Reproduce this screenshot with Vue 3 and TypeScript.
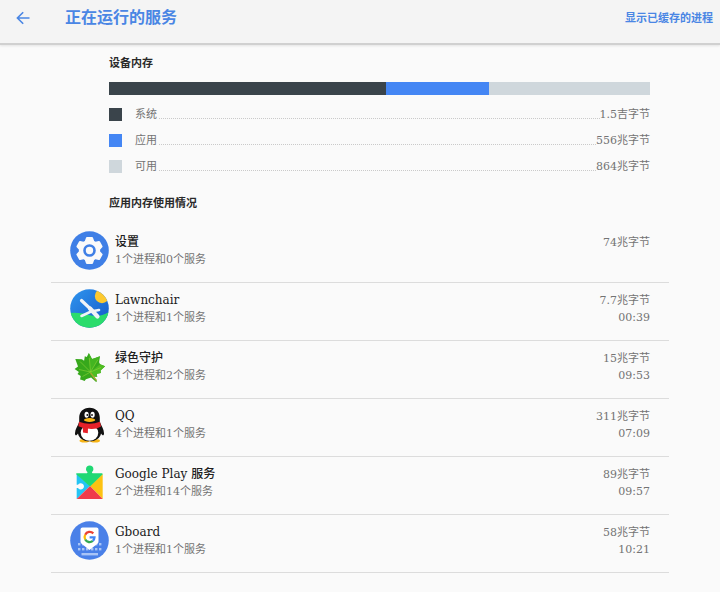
<script setup lang="ts">
interface Segment {
  key: string
  label: string
  value: string
  share: number
}

interface RunningApp {
  id: string
  name: string
  detail: string
  memory: string
  uptime?: string
}

const segments: Segment[] = [
  { key: 'system', label: '系统', value: '1.5吉字节', share: 51.2 },
  { key: 'used', label: '应用', value: '556兆字节', share: 19 },
  { key: 'free', label: '可用', value: '864兆字节', share: 29.8 },
]

const apps: RunningApp[] = [
  { id: 'settings', name: '设置', detail: '1个进程和0个服务', memory: '74兆字节' },
  { id: 'lawnchair', name: 'Lawnchair', detail: '1个进程和1个服务', memory: '7.7兆字节', uptime: '00:39' },
  { id: 'greenify', name: '绿色守护', detail: '1个进程和2个服务', memory: '15兆字节', uptime: '09:53' },
  { id: 'qq', name: 'QQ', detail: '4个进程和1个服务', memory: '311兆字节', uptime: '07:09' },
  { id: 'play', name: 'Google Play 服务', detail: '2个进程和14个服务', memory: '89兆字节', uptime: '09:57' },
  { id: 'gboard', name: 'Gboard', detail: '1个进程和1个服务', memory: '58兆字节', uptime: '10:21' },
]

const toothAngles = [0, 60, 120, 180, 240, 300]
const keyColumns = [9, 13, 26, 30]
const lowerKeyColumns = [9, 13, 17, 22, 26, 30]
</script>

<template>
  <div class="page">
    <header class="toolbar">
      <button class="back" type="button" aria-label="返回">
        <svg viewBox="0 0 14 14" aria-hidden="true">
          <path d="M13.5 7H1.5M7.2 1.2L1.4 7l5.8 5.8" />
        </svg>
      </button>
      <h1>正在运行的服务</h1>
      <a class="cached" href="#cached">显示已缓存的进程</a>
    </header>

    <main>
      <section class="memory">
        <h2>设备内存</h2>
        <div class="bar">
          <span
            v-for="s in segments"
            :key="s.key"
            :class="s.key"
            :style="{ width: s.share + '%' }"
          ></span>
        </div>
        <dl>
          <div v-for="s in segments" :key="s.key" class="legend">
            <dt><i :class="s.key"></i>{{ s.label }}</dt>
            <dd>{{ s.value }}</dd>
          </div>
        </dl>
        <h2>应用内存使用情况</h2>
      </section>

      <ul class="apps">
        <li v-for="app in apps" :key="app.id">
          <a class="app" :href="'#' + app.id">
            <svg class="icon" viewBox="0 0 39 39" aria-hidden="true">
              <g v-if="app.id === 'settings'">
                <circle cx="19.5" cy="19.5" r="19.3" fill="#3f7fe6" />
                <g fill="#fafafa">
                  <circle cx="19.5" cy="19.5" r="10.6" />
                  <path
                    v-for="angle in toothAngles"
                    :key="angle"
                    d="M14.500 11l1.500-4.200q.2-.8 1-.8h5q.8 0 1 .8l1.500 4.200z"
                    :transform="`rotate(${angle} 19.5 19.5)`"
                  />
                </g>
                <circle cx="19.5" cy="19.5" r="5" fill="#fafafa" stroke="#3f7fe6" stroke-width="2.6" />
              </g>

              <g v-else-if="app.id === 'lawnchair'">
                <defs>
                  <linearGradient id="sky" x1="0" y1="0" x2="1" y2="1">
                    <stop offset="0" stop-color="#2f95ee" />
                    <stop offset="1" stop-color="#1558c8" />
                  </linearGradient>
                  <clipPath id="disc"><circle cx="19.5" cy="19.5" r="19.3" /></clipPath>
                </defs>
                <g clip-path="url(#disc)">
                  <path d="M0 0h39v39H0z" fill="url(#sky)" />
                  <circle cx="32" cy="7" r="7.2" fill="#fdc92f" />
                  <path d="M0 24Q9 23 19 26T39 23v16H0z" fill="#2bdc6c" />
                </g>
                <g fill="none" stroke="#f0f3f7" stroke-linecap="round">
                  <path d="M11.500 11.500L20 19.500" stroke-width="3.200" />
                  <path d="M20 19.500l7.500 8" stroke-width="4.200" />
                  <path d="M11.500 27L21 22.500l8-1.500" stroke-width="2.600" />
                </g>
              </g>

              <g v-else-if="app.id === 'greenify'">
                <path
                  d="M18.800 6l3.200 6 1.800-.6L30 9.200l-.9 6 1 2 5 2-4.600 4.200.3 2.600-4 .8.4 3-4.700-.4 4.600 4.600-1 1-5-4.400-5.200 1.600-1.300 1.800-2.500-1-2-.4.600-3.600-3.200-2 1.400-2.100-4.300-3 3.400-2.400L5.300 12l6.600.3 2.200 1.500.7-4.600 2 .8z"
                  fill="#37a81c"
                />
                <path d="M18.800 6l3.200 6 1.800-.6L30 9.200 20.500 25z" fill="#43b520" />
                <path d="M30.100 17.200l5 2-4.600 4.200.3 2.600-4 .8.400 3-4.700-.4-2-4.400z" fill="#4fbd22" />
                <path
                  d="M19.300 11l1.200 14 5.500 8.500M20.500 25L10 14.500M20.500 25l7.500-12.500M20.500 25L9 22.500M20.500 25l10.500-4.500M20.500 25l-8 4.500"
                  fill="none"
                  stroke="#8fd438"
                  stroke-width=".6"
                />
                <path d="M20.500 26l6 7.500" fill="none" stroke="#a3a52c" stroke-width="1.300" />
              </g>

              <g v-else-if="app.id === 'qq'">
                <ellipse cx="14.500" cy="35.800" rx="5" ry="1.800" fill="#f7b415" />
                <ellipse cx="25" cy="35.800" rx="5" ry="1.800" fill="#f7b415" />
                <path
                  d="M19.500 2.700c6.400 0 10.300 4.300 10.300 10v4c1.500 4 4.200 7.500 4.200 11.500 0 2.500-1.300 3-3 .3-.8 4.500-5 7.800-11.500 7.800S8.800 33 8 28.500c-1.700 2.700-3 2.200-3-.3 0-4 3-7.500 4.200-11.500v-4c0-5.700 4-10 10.300-10z"
                  fill="#111"
                />
                <ellipse cx="19.500" cy="27.800" rx="8.800" ry="8" fill="#fff" />
                <path d="M9 16.800q10.500 4 21 0l1 4.700q-4 2.500-9 2.600-7 .2-13.600-2.800z" fill="#e52129" />
                <path d="M12.800 22l5.200 1-.2 5.200-4.800-.8z" fill="#e52129" />
                <ellipse cx="16.600" cy="9.700" rx="2.100" ry="3" fill="#fff" />
                <ellipse cx="22.600" cy="9.700" rx="2.100" ry="3" fill="#fff" />
                <circle cx="17.300" cy="10" r=".9" fill="#111" />
                <circle cx="22" cy="10" r=".9" fill="#111" />
                <ellipse cx="19.600" cy="15" rx="5.600" ry="1.900" fill="#f9b716" />
              </g>

              <g v-else-if="app.id === 'play'">
                <path d="M6.700 11L20 23 6.700 36z" fill="#24c4f4" />
                <path d="M32.700 11L20 23l12.700 13z" fill="#fdc212" />
                <path d="M6.700 36L20 23l12.700 13z" fill="#ef3b4b" />
                <path d="M6.700 10.200h10.200q.8-.3.500-1.200a3.700 3.700 0 1 1 4.600 0q-.2.900.6 1.200h9.100q1 0 1 1L20 23.500 6.200 11.200q-.2-1 .5-1z" fill="#1fd873" />
                <path d="M6 21.800h2a3.200 3.200 0 1 1 0 3.200H6z" fill="#fafafa" />
              </g>

              <g v-else>
                <circle cx="19.500" cy="19.500" r="19.300" fill="#4a80e8" />
                <g fill="#a9c4f6">
                  <rect v-for="x in keyColumns" :key="'u' + x" :x="x - 1" y="22" width="2.400" height="2.400" />
                  <rect v-for="x in lowerKeyColumns" :key="'l' + x" :x="x - 1" y="27" width="2.400" height="2.400" />
                  <rect x="11.500" y="32" width="16.500" height="2.400" />
                </g>
                <path d="M12.500 6.500h14q2 0 2 2v12q0 1.500-1.500 2.500l-7.500 6-7.500-6q-1.500-1-1.500-2.500v-12q0-2 2-2z" fill="#fff" />
                <g fill="none" stroke-width="2.300">
                  <path d="M23.300 12.400A5 5 0 0 0 15.200 13.700" stroke="#ea4335" />
                  <path d="M15.200 13.700a5 5 0 0 0 0 4.800" stroke="#fbbc05" />
                  <path d="M15.200 18.500a5 5 0 0 0 7.600 1.400" stroke="#34a853" />
                  <path d="M22.800 19.900a5 5 0 0 0 1.700-3.600h-4.900" stroke="#4285f4" />
                </g>
              </g>
            </svg>
            <span class="info">
              <strong>{{ app.name }}</strong>
              <span>{{ app.detail }}</span>
            </span>
            <span class="usage">
              <span>{{ app.memory }}</span>
              <time v-if="app.uptime">{{ app.uptime }}</time>
            </span>
          </a>
        </li>
      </ul>
    </main>
  </div>
</template>

<style>
body {
  margin: 0;
  background: #fafafa;
}
</style>

<style scoped>
.page {
  font-family: "DejaVu Serif", "Noto Sans CJK SC", serif;
  font-size: 11px;
  line-height: 17px;
  color: #737373;
}

.toolbar {
  display: flex;
  align-items: center;
  box-sizing: border-box;
  height: 45px;
  padding: 0 7px 8px 16px;
  background: #f4f4f4;
  border-bottom: 2px solid #d0d0d0;
  box-shadow: 0 1px 2px #e4e4e4;
  color: #4a86e4;
}

.back {
  display: flex;
  width: 14px;
  margin: 0 35px 0 0;
  padding: 0;
  border: 0;
  background: none;
  color: inherit;
  cursor: pointer;
}

.back svg {
  width: 14px;
  height: 14px;
  fill: none;
  stroke: currentColor;
  stroke-width: 1.6;
}

h1 {
  flex: 1;
  margin: 0;
  font-size: 16px;
  line-height: 24px;
  font-weight: 700;
}

.cached {
  padding-top: 1px;
  color: inherit;
  font-weight: 700;
  text-decoration: none;
}

.memory {
  padding: 10px 70px 12px 109px;
}

h2 {
  margin: 0;
  font-size: 11px;
  line-height: 18px;
  font-weight: 700;
  color: #2a2a2a;
}

.bar {
  display: flex;
  height: 13px;
  margin: 9px 0 6px;
}

.system {
  background: #3a444b;
}

.used {
  background: #4486f4;
}

.free {
  background: #cfd7dc;
}

dl {
  margin: 0 0 16px;
}

.legend {
  display: flex;
  align-items: center;
  height: 26px;
}

/* Dotted leader between the label and its value */
.legend dt::after {
  content: "";
  flex: 1;
  height: 9px;
  margin-left: -11px;
  border-bottom: 1px dotted #cacaca;
}

dt {
  display: flex;
  flex: 1;
  align-items: center;
  gap: 13px;
}

dt i {
  width: 13px;
  height: 13px;
}

dd {
  margin: 0;
}

ul.apps {
  margin: 0;
  padding: 0 51px;
  list-style: none;
}

.app {
  display: flex;
  align-items: center;
  gap: 6px;
  padding: 6px 19px 12px;
  border-bottom: 1px solid #dcdcdc;
  color: inherit;
  text-decoration: none;
}

.icon {
  flex: none;
  width: 39px;
  height: 39px;
}

.info,
.usage {
  display: flex;
  flex-direction: column;
  height: 34px;
}

.info {
  flex: 1;
}

.usage {
  text-align: right;
}

strong {
  font-size: 12px;
  font-weight: 500;
  color: #202020;
}
</style>
